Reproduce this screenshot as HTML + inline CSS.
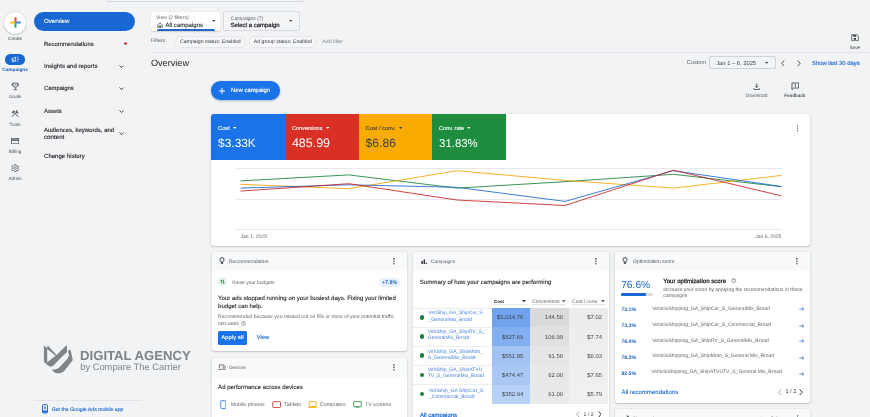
<!DOCTYPE html>
<html lang="en"><head><meta charset="utf-8"><title>Overview - Google Ads</title><style>
html,body{margin:0;padding:0;}
body{width:870px;height:417px;overflow:hidden;background:#f1f3f4;font-family:"Liberation Sans",sans-serif;position:relative;-webkit-font-smoothing:antialiased;}
#root{position:absolute;left:0;top:0;width:870px;height:417px;overflow:hidden;background:#f1f3f4;will-change:transform;}
.t{position:absolute;white-space:nowrap;line-height:1;margin:0;padding:0;text-rendering:geometricPrecision;}
.b{position:absolute;margin:0;padding:0;display:block;}
</style></head>
<body><div id="root">
<div class="b" style="left:105.00px;top:-10.00px;width:200.20px;height:11.70px;background:transparent;border:0.6px solid #d5d8dc;border-radius:3px;box-sizing:border-box;"></div>
<div class="b" style="left:4.30px;top:11.80px;width:22.00px;height:22.00px;background:#fff;border-radius:50%;box-shadow:0 0.5px 1.5px rgba(60,64,67,.3),0 0.5px 2.5px rgba(60,64,67,.15);"></div>
<svg class="b" style="left:9.50px;top:17.30px;" width="11.00" height="11.00" viewBox="0 0 11 11"><rect x="4.500" y="0.300" width="2" height="5.200" fill="#ea4335"/><rect x="4.500" y="5.500" width="2" height="5.200" fill="#34a853"/><rect x="0.300" y="4.500" width="5.200" height="2" fill="#fbbc04"/><rect x="5.500" y="4.500" width="5.200" height="2" fill="#4285f4"/></svg>
<span class="t" style="top:37px;font-size:4.70px;color:#3c4043;left:15.10px;transform:translateX(-50%);">Create</span>
<div class="b" style="left:5.30px;top:54.10px;width:19.30px;height:10.60px;background:#1967d2;border-radius:5.3px;"></div>
<svg class="b" style="left:10.60px;top:56.20px;" width="9.20" height="6.60" viewBox="0 0 18.400 13.200"><path d="M1.800 4.600h3l4.400-2.400v8.600l-4.400-2.400h-3zM3.400 8.600v3.200h2V8.600" fill="none" stroke="#fff" stroke-width="1.500" stroke-linejoin="round"/><path d="M12.400 6.600h4M12 3.600l2.600-2M12 9.600l2.600 2" stroke="#fff" stroke-width="1.500" fill="none"/></svg>
<span class="t" style="top:69px;font-size:4.76px;color:#185abc;font-weight:700;left:15.10px;transform:translateX(-50%);">Campaigns</span>
<svg class="b" style="left:10.80px;top:82.40px;" width="8.60" height="8.60" viewBox="0 0 16 16"><path d="M4 2h8v4a4 4 0 0 1-8 0zM4 3.200H1.600v1.400a2.600 2.600 0 0 0 2.600 2.600M12 3.200h2.400v1.400a2.600 2.600 0 0 1-2.600 2.600M8 10v3.400M4.800 14.200h6.400" stroke="#474b50" stroke-width="1.450" fill="none"/><circle cx="8" cy="5.400" r="1" fill="#474b50"/></svg>
<span class="t" style="top:95px;font-size:4.70px;color:#4d5156;left:15.10px;transform:translateX(-50%);">Goals</span>
<svg class="b" style="left:10.90px;top:109.90px;" width="8.20" height="7.40" viewBox="0 0 16.400 14.800"><path d="M1.600 13.600L10.400 4.800M14.800 13.600L6 4.800" stroke="#474b50" stroke-width="1.900" fill="none"/><path d="M2.600 5.800L7 1.800" stroke="#474b50" stroke-width="3" fill="none"/><path d="M14 1a3.100 3.100 0 1 0 1.600 3.800l-2.300.300-1.100-1.500z" fill="#474b50"/></svg>
<span class="t" style="top:123px;font-size:4.70px;color:#4d5156;left:15.10px;transform:translateX(-50%);">Tools</span>
<svg class="b" style="left:11.00px;top:137.90px;" width="8.20" height="6.20" viewBox="0 0 16.400 12.400"><rect x="0.800" y="0.800" width="14.800" height="10.800" fill="none" stroke="#474b50" stroke-width="1.400"/><rect x="0.800" y="2.800" width="14.800" height="2.800" fill="#474b50"/></svg>
<span class="t" style="top:150px;font-size:4.70px;color:#4d5156;left:15.10px;transform:translateX(-50%);">Billing</span>
<svg class="b" style="left:10.90px;top:164.00px;" width="8.40" height="8.40" viewBox="0 0 16.800 16.800"><path d="M6.77 3.15L7.15 1.11L9.65 1.11L10.03 3.15L12.14 4.37L14.09 3.67L15.34 5.84L13.76 7.18L13.76 9.62L15.34 10.96L14.09 13.13L12.14 12.43L10.03 13.65L9.65 15.69L7.15 15.69L6.77 13.65L4.66 12.43L2.71 13.13L1.46 10.96L3.04 9.62L3.04 7.18L1.46 5.84L2.71 3.67L4.66 4.37Z" fill="none" stroke="#474b50" stroke-width="1.400" stroke-linejoin="round"/><circle cx="8.400" cy="8.400" r="2.300" fill="none" stroke="#474b50" stroke-width="1.300"/></svg>
<span class="t" style="top:177px;font-size:4.70px;color:#4d5156;left:15.10px;transform:translateX(-50%);">Admin</span>
<div class="b" style="left:34.00px;top:11.50px;width:101.10px;height:19.50px;background:#1967d2;border-radius:9.75px;"></div>
<span class="t" style="top:19px;font-size:6.07px;color:#fff;left:44.00px;-webkit-text-stroke:0.11px #fff;letter-spacing:0.004px;">Overview</span>
<span class="t" style="top:43px;font-size:5.96px;color:#202124;left:44.00px;-webkit-text-stroke:0.11px #202124;letter-spacing:0.004px;">Recommendations</span>
<svg class="b" style="left:122.50px;top:41.10px;" width="5.00" height="5.00" viewBox="0 0 5 5"><circle cx="2.5" cy="2.5" r="1.35" fill="#c5221f"/></svg>
<span class="t" style="top:64px;font-size:6.09px;color:#202124;left:44.00px;-webkit-text-stroke:0.11px #202124;letter-spacing:0.005px;">Insights and reports</span>
<span class="t" style="top:87px;font-size:5.87px;color:#202124;left:44.00px;-webkit-text-stroke:0.11px #202124;letter-spacing:0.007px;">Campaigns</span>
<span class="t" style="top:110px;font-size:5.93px;color:#202124;left:44.00px;-webkit-text-stroke:0.11px #202124;letter-spacing:0.003px;">Assets</span>
<span class="t" style="top:128px;font-size:6.01px;color:#202124;left:44.00px;-webkit-text-stroke:0.11px #202124;letter-spacing:0.006px;">Audiences, keywords, and</span>
<span class="t" style="top:135px;font-size:6.19px;color:#202124;left:44.00px;-webkit-text-stroke:0.11px #202124;">content</span>
<span class="t" style="top:154px;font-size:6.07px;color:#202124;left:44.00px;-webkit-text-stroke:0.11px #202124;">Change history</span>
<svg class="b" style="left:118.50px;top:64.90px;" width="5.20" height="3.20" viewBox="0 0 5.2 3.2"><path d="M0.5 0.5L2.6 2.6L4.7 0.5" fill="none" stroke="#3c4043" stroke-width="0.95"/></svg>
<svg class="b" style="left:118.50px;top:87.20px;" width="5.20" height="3.20" viewBox="0 0 5.2 3.2"><path d="M0.5 0.5L2.6 2.6L4.7 0.5" fill="none" stroke="#3c4043" stroke-width="0.95"/></svg>
<svg class="b" style="left:118.50px;top:109.60px;" width="5.20" height="3.20" viewBox="0 0 5.2 3.2"><path d="M0.5 0.5L2.6 2.6L4.7 0.5" fill="none" stroke="#3c4043" stroke-width="0.95"/></svg>
<svg class="b" style="left:118.50px;top:131.90px;" width="5.20" height="3.20" viewBox="0 0 5.2 3.2"><path d="M0.5 0.5L2.6 2.6L4.7 0.5" fill="none" stroke="#3c4043" stroke-width="0.95"/></svg>
<svg class="b" style="left:40.00px;top:342.00px;" width="38.00" height="34.00" viewBox="40 342 38 34"><path fill-rule="evenodd" fill="#7f8489" d="M43.9 345.6L47.2 348.3L47.5 345.2L56.6 354.9L66.5 345.3L67 346V351.9L60.7 358L53.3 365.8Q51.5 367.1 49.3 366.2L48 365.6L43.9 361.7ZM47.2 349.1L55.6 355.7L47.2 362.2Z"/><path fill="#7f8489" d="M69.9 349.2L68 351L69 355.4L67.3 359L64.45 362L61.3 365.3Q60.4 366.6 59.2 367.6Q58 368.6 56.6 369.1L51.8 369.95L54.4 372.2Q55.8 373.2 57.5 373.3Q59.4 373.4 61 372.9Q63 372.2 64.45 370.7L69 365L72.8 360L70.8 351Z"/></svg>
<span class="t" style="top:349px;font-size:13.16px;color:#7f8489;font-weight:700;left:80.00px;letter-spacing:0.003px;">DIGITAL AGENCY</span>
<span class="t" style="top:363px;font-size:9.37px;color:#7f8489;left:80.20px;letter-spacing:-0.007px;">by Compare The Carrier</span>
<div class="b" style="left:34.00px;top:399.50px;width:107.60px;height:0.60px;background:#e1e3e6;"></div>
<svg class="b" style="left:42.30px;top:404.20px;" width="6.00" height="9.60" viewBox="0 0 12 19.2"><rect x="1.2" y="1.2" width="9.6" height="16.8" rx="1.6" fill="none" stroke="#1967d2" stroke-width="2"/><rect x="1.2" y="13" width="9.6" height="4" fill="#1967d2"/><rect x="4.8" y="5" width="2.4" height="5" fill="#1967d2"/></svg>
<span class="t" style="top:408px;font-size:5.17px;color:#1967d2;left:51.70px;-webkit-text-stroke:0.12px #1967d2;letter-spacing:0.004px;">Get the Google Ads mobile app</span>
<div class="b" style="left:151.00px;top:12.00px;width:69.00px;height:19.00px;background:#fff;border-radius:2px;box-shadow:0 0.2px 1.2px rgba(60,64,67,.2);"></div>
<div class="b" style="left:156.80px;top:29.00px;width:57.90px;height:2.00px;background:#2466cc;border-radius:1.5px 1.5px 0 0;"></div>
<span class="t" style="top:16px;font-size:5.12px;color:#5f6368;left:156.00px;letter-spacing:0.026px;">View (2 filters)</span>
<svg class="b" style="left:156.70px;top:21.70px;" width="6.00" height="6.00" viewBox="0 0 12 12"><path d="M1.6 5.4L6 1.6l4.400 3.800v5.200H1.600z" fill="none" stroke="#3c4043" stroke-width="1.500"/><rect x="4.6" y="6.600" width="2.800" height="4" fill="#3c4043"/></svg>
<span class="t" style="top:23px;font-size:6.02px;color:#202124;left:165.50px;-webkit-text-stroke:0.08px #202124;letter-spacing:0.004px;">All campaigns</span>
<svg class="b" style="left:212.10px;top:20.30px;" width="3.40" height="1.80" viewBox="0 0 3.4 1.8"><path d="M0 0H3.4L1.7 1.8Z" fill="#3c4043"/></svg>
<div class="b" style="left:223.40px;top:11.30px;width:76.40px;height:19.90px;background:#f4f5f6;border:0.5px solid #d6d9dd;border-radius:2px;box-sizing:border-box;"></div>
<span class="t" style="top:17px;font-size:5.00px;color:#5f6368;left:230.60px;letter-spacing:-0.007px;">Campaigns (7)</span>
<span class="t" style="top:24px;font-size:5.95px;color:#202124;left:230.60px;-webkit-text-stroke:0.22px #202124;letter-spacing:0.008px;">Select a campaign</span>
<svg class="b" style="left:289.30px;top:20.30px;" width="3.40" height="1.80" viewBox="0 0 3.4 1.8"><path d="M0 0H3.4L1.7 1.8Z" fill="#3c4043"/></svg>
<span class="t" style="top:39px;font-size:5.25px;color:#5f6368;left:150.90px;">Filters</span>
<div class="b" style="left:174.90px;top:35.60px;width:70.80px;height:12.20px;background:#f5f6f7;border:0.5px solid #e5e7ea;border-radius:6.1px;box-sizing:border-box;"></div>
<span class="t" style="top:40px;font-size:5.18px;color:#3c4043;left:180.00px;">Campaign status: Enabled</span>
<div class="b" style="left:248.70px;top:35.60px;width:68.30px;height:12.20px;background:#f5f6f7;border:0.5px solid #e5e7ea;border-radius:6.1px;box-sizing:border-box;"></div>
<span class="t" style="top:40px;font-size:5.19px;color:#3c4043;left:253.80px;letter-spacing:-0.003px;">Ad group status: Enabled</span>
<span class="t" style="top:40px;font-size:5.25px;color:#80868b;left:322.30px;">Add filter</span>
<div class="b" style="left:150.90px;top:52.10px;width:719.10px;height:0.60px;background:#e3e5e8;"></div>
<span class="t" style="top:59px;font-size:9.15px;color:#202124;left:150.90px;letter-spacing:0.009px;">Overview</span>
<svg class="b" style="left:851.00px;top:34.00px;" width="8.00" height="7.40" viewBox="0 0 16 14.8"><path d="M1.4 1.4h10.4l2.8 2.600v9.400H1.400z" fill="none" stroke="#3c4043" stroke-width="1.5"/><rect x="4" y="2" width="6.400" height="3.200" fill="#3c4043"/><rect x="5.600" y="8" width="4.400" height="3.600" fill="#3c4043"/></svg>
<span class="t" style="top:46px;font-size:4.62px;color:#3c4043;left:854.80px;transform:translateX(-50%);letter-spacing:-0.004px;">Save</span>
<span class="t" style="top:61px;font-size:5.61px;color:#5f6368;left:686.80px;letter-spacing:-0.005px;">Custom</span>
<div class="b" style="left:709.20px;top:56.30px;width:66.40px;height:12.70px;background:#f3f4f5;border:0.5px solid #d0d3d7;border-radius:2px;box-sizing:border-box;"></div>
<span class="t" style="top:62px;font-size:5.79px;color:#3c4043;left:716.20px;letter-spacing:0.003px;">Jan 1 – 6, 2025</span>
<svg class="b" style="left:765.30px;top:62.10px;" width="3.40" height="1.80" viewBox="0 0 3.4 1.8"><path d="M0 0H3.4L1.7 1.8Z" fill="#3c4043"/></svg>
<svg class="b" style="left:781.45px;top:59.50px;" width="3.90" height="6.60" viewBox="0 0 3.9 6.6"><path d="M3.2 0.5L0.7 3.3L3.2 6.1" fill="none" stroke="#3c4043" stroke-width="0.9"/></svg>
<svg class="b" style="left:797.35px;top:59.50px;" width="3.90" height="6.60" viewBox="0 0 3.9 6.6"><path d="M0.7 0.5L3.2 3.3L0.7 6.1" fill="none" stroke="#3c4043" stroke-width="0.9"/></svg>
<span class="t" style="top:62px;font-size:5.87px;color:#1967d2;left:812.00px;-webkit-text-stroke:0.12px #1967d2;letter-spacing:0.002px;">Show last 30 days</span>
<svg class="b" style="left:752.80px;top:83.00px;" width="7.40" height="7.40" viewBox="0 0 14 14"><path d="M7 1v7.400M3.800 5.400L7 8.600l3.200-3.200M1.800 9.800v2.600h10.400V9.800" fill="none" stroke="#3c4043" stroke-width="1.5"/></svg>
<span class="t" style="top:95px;font-size:4.91px;color:#5f6368;left:756.50px;transform:translateX(-50%);letter-spacing:-0.004px;">Download</span>
<svg class="b" style="left:790.50px;top:82.10px;" width="8.60" height="8.60" viewBox="0 0 16 16"><path d="M1.800 1.800h12.400v9.400H5l-3.200 3z" fill="none" stroke="#3c4043" stroke-width="1.5"/><rect x="7.200" y="3.600" width="1.600" height="3.600" fill="#3c4043"/><rect x="7.200" y="8" width="1.600" height="1.600" fill="#3c4043"/></svg>
<span class="t" style="top:95px;font-size:4.79px;color:#303438;left:794.70px;transform:translateX(-50%);-webkit-text-stroke:0.06px #303438;">Feedback</span>
<div class="b" style="left:211.40px;top:80.90px;width:68.30px;height:19.00px;background:#1a73e8;border-radius:9.5px;box-shadow:0 0.5px 1.5px rgba(26,95,200,.35),0 1px 2.5px rgba(60,64,67,.16);"></div>
<svg class="b" style="left:218.50px;top:87.50px;" width="6.00" height="6.00" viewBox="0 0 6 6"><path d="M3 0V6M0 3H6" stroke="#fff" stroke-width="1"/></svg>
<span class="t" style="top:89px;font-size:5.92px;color:#fff;left:231.00px;-webkit-text-stroke:0.15px #fff;">New campaign</span>
<div class="b" style="left:211.40px;top:114.20px;width:598.60px;height:131.40px;background:#fff;border-radius:3px;box-shadow:0 0.4px 1px rgba(60,64,67,.17),0 0.6px 2px 0.3px rgba(60,64,67,.09);"></div>
<div class="b" style="left:211.40px;top:114.20px;width:73.80px;height:46.10px;background:#1a73e8;border-radius:3px 0 0 0;"></div>
<span class="t" style="top:127px;font-size:5.69px;color:#fff;left:218.10px;-webkit-text-stroke:0.12px #fff;">Cost</span>
<svg class="b" style="left:233.00px;top:127.25px;" width="3.40" height="1.90" viewBox="0 0 3.4 1.9"><path d="M0 0H3.4L1.7 1.9Z" fill="#fff"/></svg>
<span class="t" style="top:138px;font-size:11.90px;color:#fff;left:218.10px;letter-spacing:0.002px;">$3.33K</span>
<div class="b" style="left:285.20px;top:114.20px;width:73.70px;height:46.10px;background:#d93025;"></div>
<span class="t" style="top:127px;font-size:5.49px;color:#fff;left:291.90px;-webkit-text-stroke:0.12px #fff;">Conversions</span>
<svg class="b" style="left:325.60px;top:127.25px;" width="3.40" height="1.90" viewBox="0 0 3.4 1.9"><path d="M0 0H3.4L1.7 1.9Z" fill="#fff"/></svg>
<span class="t" style="top:137px;font-size:12.46px;color:#fff;left:291.90px;">485.99</span>
<div class="b" style="left:358.90px;top:114.20px;width:73.50px;height:46.10px;background:#f9ab00;"></div>
<span class="t" style="top:127px;font-size:5.70px;color:#3c4043;left:365.60px;-webkit-text-stroke:0.12px #3c4043;letter-spacing:0.008px;">Cost / conv.</span>
<svg class="b" style="left:398.50px;top:127.25px;" width="3.40" height="1.90" viewBox="0 0 3.4 1.9"><path d="M0 0H3.4L1.7 1.9Z" fill="#3c4043"/></svg>
<span class="t" style="top:137px;font-size:12.11px;color:#3c4043;left:365.60px;letter-spacing:-0.002px;">$6.86</span>
<div class="b" style="left:432.40px;top:114.20px;width:73.60px;height:46.10px;background:#1e8e3e;"></div>
<span class="t" style="top:127px;font-size:5.51px;color:#fff;left:439.10px;-webkit-text-stroke:0.12px #fff;letter-spacing:0.003px;">Conv. rate</span>
<svg class="b" style="left:467.30px;top:127.25px;" width="3.40" height="1.90" viewBox="0 0 3.4 1.9"><path d="M0 0H3.4L1.7 1.9Z" fill="#fff"/></svg>
<span class="t" style="top:139px;font-size:11.38px;color:#fff;left:439.10px;">31.83%</span>
<svg class="b" style="left:796.60px;top:125.40px;" width="1.80" height="6.60" viewBox="0 0 1.8 6.6"><circle cx="0.9" cy="0.9" r="0.8" fill="#3c4043"/><circle cx="0.9" cy="3.3" r="0.8" fill="#3c4043"/><circle cx="0.9" cy="5.7" r="0.8" fill="#3c4043"/></svg>
<div class="b" style="left:235.50px;top:168.05px;width:546.50px;height:0.50px;background:#e6e8eb;"></div>
<div class="b" style="left:235.50px;top:199.15px;width:546.50px;height:0.50px;background:#e6e8eb;"></div>
<div class="b" style="left:235.50px;top:229.25px;width:546.50px;height:0.50px;background:#e6e8eb;"></div>
<svg class="b" style="left:230.00px;top:160.30px;" width="560.00" height="60.00" viewBox="230 160.3 560 60"><polyline points="240.5,181.2 348.7,175.2 456.9,188.4 565.0,182.0 673.4,174.6 781.4,187.0" fill="none" stroke="#188038" stroke-width="0.85" stroke-linejoin="round"/><polyline points="240.5,184.6 348.7,189.0 456.9,171.0 565.0,180.7 673.4,188.4 781.4,175.7" fill="none" stroke="#f5a400" stroke-width="0.85" stroke-linejoin="round"/><polyline points="240.5,188.4 348.7,185.1 456.9,187.6 565.0,201.7 673.4,171.0 781.4,186.8" fill="none" stroke="#1b66d2" stroke-width="0.85" stroke-linejoin="round"/><polyline points="240.5,191.4 348.7,184.0 456.9,200.3 565.0,205.8 673.4,170.5 781.4,196.1" fill="none" stroke="#c5221f" stroke-width="0.85" stroke-linejoin="round"/></svg>
<span class="t" style="top:235px;font-size:5.07px;color:#5f6368;left:240.50px;letter-spacing:0.003px;">Jan 1, 2025</span>
<span class="t" style="top:235px;font-size:5.01px;color:#5f6368;right:88.60px;letter-spacing:0.005px;">Jan 6, 2025</span>
<div class="b" style="left:211.70px;top:252.00px;width:195.00px;height:99.30px;background:#fff;border-radius:3px;box-shadow:0 0.4px 1px rgba(60,64,67,.17),0 0.6px 2px 0.3px rgba(60,64,67,.09);"></div>
<div class="b" style="left:211.70px;top:252.00px;width:195.00px;height:19.10px;background:#f8f9fa;border-radius:3px 3px 0 0;"></div>
<svg class="b" style="left:219.00px;top:257.40px;" width="6.00" height="7.60" viewBox="0 0 12 15.2"><path d="M6 1.200a4 4 0 0 1 2.200 7.400v1.800H3.800V8.600A4 4 0 0 1 6 1.200z" fill="none" stroke="#26292d" stroke-width="1.700"/><rect x="3.800" y="11.600" width="4.400" height="1.900" fill="#26292d"/></svg>
<span class="t" style="top:260px;font-size:5.06px;color:#53575c;left:228.90px;letter-spacing:0.003px;">Recommendation</span>
<svg class="b" style="left:393.40px;top:258.30px;" width="1.80" height="6.60" viewBox="0 0 1.8 6.6"><circle cx="0.9" cy="0.9" r="0.8" fill="#3c4043"/><circle cx="0.9" cy="3.3" r="0.8" fill="#3c4043"/><circle cx="0.9" cy="5.7" r="0.8" fill="#3c4043"/></svg>
<div class="b" style="left:218.10px;top:277.40px;width:9.00px;height:9.00px;background:#e6f4ea;border-radius:50%;"></div>
<svg class="b" style="left:220.10px;top:279.30px;" width="5.00" height="5.20" viewBox="0 0 10 10.400"><path d="M3 9V2M1 4l2-2.200L5 4M7 1.400v7M5 6.400l2 2.200 2-2.200" fill="none" stroke="#188038" stroke-width="1.300"/></svg>
<span class="t" style="top:282px;font-size:4.91px;color:#5f6368;left:232.30px;">Raise your budgets</span>
<div class="b" style="left:379.00px;top:277.60px;width:21.10px;height:9.40px;background:#e8f0fe;border-radius:4.7px;"></div>
<span class="t" style="top:281px;font-size:5.30px;color:#1967d2;font-weight:700;left:389.60px;transform:translateX(-50%);letter-spacing:0.006px;">+7.8%</span>
<span class="t" style="top:296px;font-size:6.04px;color:#202124;left:218.10px;-webkit-text-stroke:0.09px #202124;letter-spacing:0.004px;">Your ads stopped running on your busiest days. Fixing your limited</span>
<span class="t" style="top:304px;font-size:6.02px;color:#202124;left:218.10px;-webkit-text-stroke:0.09px #202124;">budget can help.</span>
<span class="t" style="top:315px;font-size:5.06px;color:#5f6368;left:218.10px;letter-spacing:0.006px;">Recommended because you missed out on 5% or more of your potential traffic</span>
<span class="t" style="top:322px;font-size:4.99px;color:#5f6368;left:218.10px;letter-spacing:0.009px;">last week</span>
<svg class="b" style="left:241.30px;top:320.60px;" width="5.00" height="5.00" viewBox="0 0 10 10"><circle cx="5" cy="5" r="4" fill="none" stroke="#5f6368" stroke-width="1"/><path d="M3.800 4a1.300 1.300 0 1 1 1.800 1.200v.8" fill="none" stroke="#5f6368" stroke-width="1"/><rect x="5" y="7" width="1" height="1" fill="#5f6368"/></svg>
<div class="b" style="left:218.10px;top:330.60px;width:28.90px;height:14.00px;background:#1a73e8;border-radius:1.6px;"></div>
<span class="t" style="top:336px;font-size:5.43px;color:#fff;font-weight:700;left:232.50px;transform:translateX(-50%);">Apply all</span>
<span class="t" style="top:336px;font-size:5.78px;color:#1967d2;left:256.70px;-webkit-text-stroke:0.12px #1967d2;">View</span>
<div class="b" style="left:211.70px;top:357.90px;width:195.00px;height:82.10px;background:#fff;border-radius:3px;box-shadow:0 0.4px 1px rgba(60,64,67,.17),0 0.6px 2px 0.3px rgba(60,64,67,.09);"></div>
<div class="b" style="left:211.70px;top:357.90px;width:195.00px;height:19.10px;background:#f8f9fa;border-radius:3px 3px 0 0;"></div>
<svg class="b" style="left:218.20px;top:363.80px;" width="7.60" height="6.40" viewBox="0 0 15.2 12.800"><path d="M2.600 9V1.800h9.800M0.600 11.400h8" fill="none" stroke="#3c4043" stroke-width="1.400"/><rect x="10" y="4.400" width="4.400" height="7" rx="0.600" fill="none" stroke="#3c4043" stroke-width="1.300"/></svg>
<span class="t" style="top:367px;font-size:4.81px;color:#53575c;left:228.90px;letter-spacing:0.005px;">Devices</span>
<svg class="b" style="left:393.40px;top:364.20px;" width="1.80" height="6.60" viewBox="0 0 1.8 6.6"><circle cx="0.9" cy="0.9" r="0.8" fill="#3c4043"/><circle cx="0.9" cy="3.3" r="0.8" fill="#3c4043"/><circle cx="0.9" cy="5.7" r="0.8" fill="#3c4043"/></svg>
<span class="t" style="top:385px;font-size:6.05px;color:#202124;left:218.10px;-webkit-text-stroke:0.09px #202124;">Ad performance across devices</span>
<svg class="b" style="left:219.60px;top:399.70px;" width="6.60" height="9.20" viewBox="0 0 13.200 18.400"><rect x="1.400" y="1.400" width="10.400" height="15.600" rx="1.600" fill="#fff" stroke="#2f74d8" stroke-width="1.700"/></svg>
<span class="t" style="top:403px;font-size:5.18px;color:#5f6368;left:231.00px;letter-spacing:-0.003px;">Mobile phones</span>
<svg class="b" style="left:271.60px;top:400.50px;" width="9.20" height="7.20" viewBox="0 0 18.400 14.400"><rect x="1.400" y="1.400" width="15.600" height="11.600" rx="1.600" fill="#fff" stroke="#c9352b" stroke-width="1.700"/></svg>
<span class="t" style="top:403px;font-size:5.31px;color:#5f6368;left:284.20px;">Tablets</span>
<svg class="b" style="left:307.50px;top:400.50px;" width="9.40" height="7.40" viewBox="0 0 18.800 14.800"><rect x="2.400" y="1.400" width="14" height="9.600" rx="1" fill="#fff" stroke="#f2a600" stroke-width="1.700"/><path d="M0.600 13.400h17.600" stroke="#f9ab00" stroke-width="2"/></svg>
<span class="t" style="top:403px;font-size:5.22px;color:#5f6368;left:320.10px;letter-spacing:-0.003px;">Computers</span>
<svg class="b" style="left:352.50px;top:400.50px;" width="9.00" height="7.60" viewBox="0 0 18 15.200"><rect x="1.400" y="1.400" width="15.200" height="10" rx="1" fill="#fff" stroke="#1e8e3e" stroke-width="1.700"/><path d="M5.400 14h7.200" stroke="#1e8e3e" stroke-width="2"/></svg>
<span class="t" style="top:403px;font-size:5.15px;color:#5f6368;left:365.00px;">TV screens</span>
<div class="b" style="left:413.00px;top:252.00px;width:195.50px;height:188.00px;background:#fff;border-radius:3px;box-shadow:0 0.4px 1px rgba(60,64,67,.17),0 0.6px 2px 0.3px rgba(60,64,67,.09);"></div>
<div class="b" style="left:413.00px;top:252.00px;width:195.50px;height:19.10px;background:#f8f9fa;border-radius:3px 3px 0 0;"></div>
<svg class="b" style="left:420.50px;top:258.50px;" width="6.50" height="5.50" viewBox="0 0 6.500 5.500"><rect x="0.400" y="2" width="1.500" height="3.300" fill="#303438"/><rect x="2.600" y="0.500" width="1.500" height="4.800" fill="#303438"/><rect x="4.800" y="3.900" width="1.400" height="1.400" fill="#303438"/></svg>
<span class="t" style="top:261px;font-size:4.81px;color:#53575c;left:431.00px;letter-spacing:0.004px;">Campaigns</span>
<svg class="b" style="left:595.20px;top:258.30px;" width="1.80" height="6.60" viewBox="0 0 1.8 6.6"><circle cx="0.9" cy="0.9" r="0.8" fill="#3c4043"/><circle cx="0.9" cy="3.3" r="0.8" fill="#3c4043"/><circle cx="0.9" cy="5.7" r="0.8" fill="#3c4043"/></svg>
<span class="t" style="top:280px;font-size:6.09px;color:#202124;left:419.80px;-webkit-text-stroke:0.09px #202124;letter-spacing:0.006px;">Summary of how your campaigns are performing</span>
<span class="t" style="top:300px;font-size:4.50px;color:#202124;font-weight:700;left:494.00px;">Cost</span>
<svg class="b" style="left:522.20px;top:300.40px;" width="3.80" height="2.40" viewBox="0 0 3.8 2.4"><path d="M0 0H3.8L1.9 2.4Z" fill="#3c4043"/></svg>
<span class="t" style="top:301px;font-size:4.95px;color:#5f6368;left:532.20px;letter-spacing:0.004px;">Conversions</span>
<svg class="b" style="left:561.70px;top:300.40px;" width="3.80" height="2.40" viewBox="0 0 3.8 2.4"><path d="M0 0H3.8L1.9 2.4Z" fill="#5f6368"/></svg>
<span class="t" style="top:300px;font-size:5.05px;color:#5f6368;left:572.00px;">Cost / conv.</span>
<svg class="b" style="left:600.80px;top:300.40px;" width="3.80" height="2.40" viewBox="0 0 3.8 2.4"><path d="M0 0H3.8L1.9 2.4Z" fill="#5f6368"/></svg>
<div class="b" style="left:494.30px;top:304.00px;width:32.30px;height:0.50px;background:#e2e4e7;"></div>
<div class="b" style="left:532.00px;top:304.00px;width:34.40px;height:0.50px;background:#e2e4e7;"></div>
<div class="b" style="left:572.00px;top:304.00px;width:33.80px;height:0.50px;background:#e2e4e7;"></div>
<div class="b" style="left:413.00px;top:307.85px;width:78.70px;height:0.50px;background:#ebedef;"></div>
<div class="b" style="left:491.70px;top:308.10px;width:38.10px;height:19.10px;background:#6fa1ec;"></div>
<div class="b" style="left:529.80px;top:308.10px;width:39.60px;height:19.10px;background:#dadada;"></div>
<div class="b" style="left:569.40px;top:308.10px;width:39.10px;height:19.10px;background:#ececec;"></div>
<div class="b" style="left:419.90px;top:315.25px;width:4.40px;height:4.40px;background:#188038;border-radius:50%;"></div>
<span class="t" style="top:312px;font-size:4.86px;color:#4a86e0;left:428.50px;">VehShip_GA_ShipCar_S</span>
<span class="t" style="top:319px;font-size:4.91px;color:#4a86e0;left:428.50px;letter-spacing:-0.002px;">_GeneralMix_Broad</span>
<span class="t" style="top:316px;font-size:5.90px;color:#3c4043;right:346.70px;">$1,014.76</span>
<span class="t" style="top:316px;font-size:5.90px;color:#3c4043;right:307.00px;">144.50</span>
<span class="t" style="top:316px;font-size:5.90px;color:#3c4043;right:268.00px;">$7.02</span>
<div class="b" style="left:413.00px;top:326.95px;width:78.70px;height:0.50px;background:#ebedef;"></div>
<div class="b" style="left:491.70px;top:327.20px;width:38.10px;height:19.00px;background:#83aeef;"></div>
<div class="b" style="left:529.80px;top:327.20px;width:39.60px;height:19.00px;background:#e0e0e0;"></div>
<div class="b" style="left:569.40px;top:327.20px;width:39.10px;height:19.00px;background:#ededed;"></div>
<div class="b" style="left:419.90px;top:334.30px;width:4.40px;height:4.40px;background:#188038;border-radius:50%;"></div>
<span class="t" style="top:330px;font-size:4.99px;color:#4a86e0;left:427.80px;letter-spacing:0.009px;">VehShip_GA_ShipRV_S_</span>
<span class="t" style="top:337px;font-size:4.97px;color:#4a86e0;left:427.80px;letter-spacing:0.006px;">GeneralMix_Broad</span>
<span class="t" style="top:336px;font-size:5.90px;color:#3c4043;right:346.70px;">$827.69</span>
<span class="t" style="top:336px;font-size:5.90px;color:#3c4043;right:307.00px;">106.99</span>
<span class="t" style="top:336px;font-size:5.90px;color:#3c4043;right:268.00px;">$7.74</span>
<div class="b" style="left:413.00px;top:345.95px;width:78.70px;height:0.50px;background:#ebedef;"></div>
<div class="b" style="left:491.70px;top:346.20px;width:38.10px;height:19.20px;background:#a1c2f3;"></div>
<div class="b" style="left:529.80px;top:346.20px;width:39.60px;height:19.20px;background:#e6e6e6;"></div>
<div class="b" style="left:569.40px;top:346.20px;width:39.10px;height:19.20px;background:#efefef;"></div>
<div class="b" style="left:419.90px;top:353.40px;width:4.40px;height:4.40px;background:#188038;border-radius:50%;"></div>
<span class="t" style="top:350px;font-size:5.02px;color:#4a86e0;left:427.80px;letter-spacing:-0.005px;">VehShip_GA_ShipMoto_</span>
<span class="t" style="top:356px;font-size:5.01px;color:#4a86e0;left:427.80px;">S_GeneralMix_Broad</span>
<span class="t" style="top:355px;font-size:5.90px;color:#3c4043;right:346.70px;">$551.85</span>
<span class="t" style="top:355px;font-size:5.90px;color:#3c4043;right:307.00px;">91.50</span>
<span class="t" style="top:355px;font-size:5.90px;color:#3c4043;right:268.00px;">$6.03</span>
<div class="b" style="left:413.00px;top:365.15px;width:78.70px;height:0.50px;background:#ebedef;"></div>
<div class="b" style="left:491.70px;top:365.40px;width:38.10px;height:19.30px;background:#a9c7f4;"></div>
<div class="b" style="left:529.80px;top:365.40px;width:39.60px;height:19.30px;background:#e8e8e8;"></div>
<div class="b" style="left:569.40px;top:365.40px;width:39.10px;height:19.30px;background:#efefef;"></div>
<div class="b" style="left:419.90px;top:372.65px;width:4.40px;height:4.40px;background:#188038;border-radius:50%;"></div>
<span class="t" style="top:368px;font-size:5.02px;color:#4a86e0;left:427.80px;letter-spacing:-0.003px;">VehShip_GA_ShipATVU</span>
<span class="t" style="top:375px;font-size:4.94px;color:#4a86e0;left:427.80px;letter-spacing:-0.003px;">TV_S_GeneralMix_Broad</span>
<span class="t" style="top:374px;font-size:5.90px;color:#3c4043;right:346.70px;">$474.47</span>
<span class="t" style="top:374px;font-size:5.90px;color:#3c4043;right:307.00px;">62.00</span>
<span class="t" style="top:374px;font-size:5.90px;color:#3c4043;right:268.00px;">$7.65</span>
<div class="b" style="left:413.00px;top:384.45px;width:78.70px;height:0.50px;background:#ebedef;"></div>
<div class="b" style="left:491.70px;top:384.70px;width:38.10px;height:19.00px;background:#b7d0f6;"></div>
<div class="b" style="left:529.80px;top:384.70px;width:39.60px;height:19.00px;background:#e9e9e9;"></div>
<div class="b" style="left:569.40px;top:384.70px;width:39.10px;height:19.00px;background:#f0f0f0;"></div>
<div class="b" style="left:419.90px;top:391.80px;width:4.40px;height:4.40px;background:#188038;border-radius:50%;"></div>
<span class="t" style="top:389px;font-size:5.06px;color:#4a86e0;left:429.00px;letter-spacing:0.003px;">VehShip_GA ShipCar_S</span>
<span class="t" style="top:395px;font-size:5.01px;color:#4a86e0;left:429.00px;">_Commercial_Broad</span>
<span class="t" style="top:393px;font-size:5.90px;color:#3c4043;right:346.70px;">$352.94</span>
<span class="t" style="top:393px;font-size:5.90px;color:#3c4043;right:307.00px;">61.00</span>
<span class="t" style="top:393px;font-size:5.90px;color:#3c4043;right:268.00px;">$5.79</span>
<span class="t" style="top:414px;font-size:5.93px;color:#1967d2;left:420.10px;-webkit-text-stroke:0.20px #1967d2;">All campaigns</span>
<svg class="b" style="left:576.05px;top:411.30px;" width="3.90" height="6.60" viewBox="0 0 3.9 6.6"><path d="M3.2 0.5L0.7 3.3L3.2 6.1" fill="none" stroke="#9aa0a6" stroke-width="0.9"/></svg>
<span class="t" style="top:413px;font-size:5.20px;color:#3c4043;left:588.50px;transform:translateX(-50%);">1 / 2</span>
<svg class="b" style="left:597.55px;top:411.30px;" width="3.90" height="6.60" viewBox="0 0 3.9 6.6"><path d="M0.7 0.5L3.2 3.3L0.7 6.1" fill="none" stroke="#202124" stroke-width="0.9"/></svg>
<div class="b" style="left:614.70px;top:252.00px;width:195.00px;height:150.50px;background:#fff;border-radius:3px;box-shadow:0 0.4px 1px rgba(60,64,67,.17),0 0.6px 2px 0.3px rgba(60,64,67,.09);"></div>
<div class="b" style="left:614.70px;top:252.00px;width:195.00px;height:19.10px;background:#f8f9fa;border-radius:3px 3px 0 0;"></div>
<svg class="b" style="left:622.30px;top:257.40px;" width="6.00" height="7.60" viewBox="0 0 12 15.2"><path d="M6 1.200a4 4 0 0 1 2.200 7.400v1.800H3.800V8.600A4 4 0 0 1 6 1.200z" fill="none" stroke="#26292d" stroke-width="1.700"/><rect x="3.800" y="11.600" width="4.400" height="1.900" fill="#26292d"/></svg>
<span class="t" style="top:260px;font-size:5.03px;color:#53575c;left:633.00px;letter-spacing:0.003px;">Optimization score</span>
<svg class="b" style="left:796.40px;top:258.30px;" width="1.80" height="6.60" viewBox="0 0 1.8 6.6"><circle cx="0.9" cy="0.9" r="0.8" fill="#3c4043"/><circle cx="0.9" cy="3.3" r="0.8" fill="#3c4043"/><circle cx="0.9" cy="5.7" r="0.8" fill="#3c4043"/></svg>
<span class="t" style="top:281px;font-size:10.23px;color:#1967d2;left:621.20px;letter-spacing:0.003px;">76.6%</span>
<div class="b" style="left:621.40px;top:293.20px;width:31.40px;height:2.50px;background:#dadce0;border-radius:1.25px;"></div>
<div class="b" style="left:621.40px;top:293.20px;width:24.40px;height:2.50px;background:#1967d2;border-radius:1.25px;"></div>
<span class="t" style="top:279px;font-size:6.07px;color:#202124;left:663.20px;-webkit-text-stroke:0.25px #202124;letter-spacing:0.004px;">Your optimization score</span>
<svg class="b" style="left:730.70px;top:278.40px;" width="5.20" height="5.20" viewBox="0 0 10 10"><circle cx="5" cy="5" r="4" fill="none" stroke="#5f6368" stroke-width="1"/><path d="M3.800 4a1.300 1.300 0 1 1 1.800 1.200v.8" fill="none" stroke="#5f6368" stroke-width="1"/><rect x="5" y="7" width="1" height="1" fill="#5f6368"/></svg>
<span class="t" style="top:288px;font-size:5.02px;color:#5f6368;left:663.20px;">Increase your score by applying the recommendations in these</span>
<span class="t" style="top:295px;font-size:4.96px;color:#5f6368;left:663.20px;letter-spacing:0.005px;">campaigns</span>
<span class="t" style="top:308px;font-size:5.16px;color:#185abc;font-weight:700;left:621.40px;letter-spacing:-0.005px;">73.1%</span>
<span class="t" style="top:307px;font-size:5.02px;color:#63676c;left:652.30px;letter-spacing:0.002px;">VehicleShipping_GA_ShipCar_S_GeneralMix_Broad</span>
<svg class="b" style="left:798.60px;top:307.20px;" width="5.40" height="4.00" viewBox="0 0 5.400 4"><path d="M0.300 2H4.700M3 0.400L4.700 2L3 3.600" fill="none" stroke="#1967d2" stroke-width="0.700"/></svg>
<span class="t" style="top:324px;font-size:5.16px;color:#185abc;font-weight:700;left:621.40px;letter-spacing:-0.005px;">73.3%</span>
<span class="t" style="top:323px;font-size:5.02px;color:#63676c;left:652.30px;letter-spacing:0.002px;">VehicleShipping_GA_ShipCar_S_Commercial_Broad</span>
<svg class="b" style="left:798.60px;top:323.80px;" width="5.40" height="4.00" viewBox="0 0 5.400 4"><path d="M0.300 2H4.700M3 0.400L4.700 2L3 3.600" fill="none" stroke="#1967d2" stroke-width="0.700"/></svg>
<span class="t" style="top:340px;font-size:5.16px;color:#185abc;font-weight:700;left:621.40px;letter-spacing:-0.005px;">76.4%</span>
<span class="t" style="top:339px;font-size:5.03px;color:#63676c;left:652.30px;letter-spacing:0.007px;">VehicleShipping_GA_ShipRV_S_GeneralMix_Broad</span>
<svg class="b" style="left:798.60px;top:339.00px;" width="5.40" height="4.00" viewBox="0 0 5.400 4"><path d="M0.300 2H4.700M3 0.400L4.700 2L3 3.600" fill="none" stroke="#1967d2" stroke-width="0.700"/></svg>
<span class="t" style="top:356px;font-size:5.16px;color:#185abc;font-weight:700;left:621.40px;letter-spacing:-0.005px;">78.3%</span>
<span class="t" style="top:354px;font-size:5.01px;color:#63676c;left:652.30px;letter-spacing:0.005px;">VehicleShipping_GA_ShipMoto_S_General Mix_Broad</span>
<svg class="b" style="left:798.60px;top:355.90px;" width="5.40" height="4.00" viewBox="0 0 5.400 4"><path d="M0.300 2H4.700M3 0.400L4.700 2L3 3.600" fill="none" stroke="#1967d2" stroke-width="0.700"/></svg>
<span class="t" style="top:372px;font-size:5.16px;color:#185abc;font-weight:700;left:621.40px;letter-spacing:-0.005px;">82.5%</span>
<span class="t" style="top:370px;font-size:5.03px;color:#63676c;left:651.20px;letter-spacing:0.010px;">VehicleShipping_GA_ShipATVUTV_S_General Mix_Broad</span>
<svg class="b" style="left:798.60px;top:371.90px;" width="5.40" height="4.00" viewBox="0 0 5.400 4"><path d="M0.300 2H4.700M3 0.400L4.700 2L3 3.600" fill="none" stroke="#1967d2" stroke-width="0.700"/></svg>
<span class="t" style="top:390px;font-size:6.06px;color:#1967d2;left:621.60px;-webkit-text-stroke:0.08px #1967d2;letter-spacing:0.007px;">All recommendations</span>
<svg class="b" style="left:778.45px;top:388.70px;" width="3.90" height="6.60" viewBox="0 0 3.9 6.6"><path d="M3.2 0.5L0.7 3.3L3.2 6.1" fill="none" stroke="#9aa0a6" stroke-width="0.9"/></svg>
<span class="t" style="top:390px;font-size:5.66px;color:#3c4043;left:790.90px;transform:translateX(-50%);letter-spacing:-0.003px;">1 / 2</span>
<svg class="b" style="left:798.85px;top:388.70px;" width="3.90" height="6.60" viewBox="0 0 3.9 6.6"><path d="M0.7 0.5L3.2 3.3L0.7 6.1" fill="none" stroke="#202124" stroke-width="0.9"/></svg>
<div class="b" style="left:614.70px;top:409.40px;width:195.00px;height:60.60px;background:#fff;border-radius:3px;box-shadow:0 0.4px 1px rgba(60,64,67,.17),0 0.6px 2px 0.3px rgba(60,64,67,.09);"></div>
<div class="b" style="left:614.70px;top:409.40px;width:195.00px;height:19.10px;background:#f8f9fa;border-radius:3px 3px 0 0;"></div>
<svg class="b" style="left:622.20px;top:414.60px;" width="7.00" height="7.00" viewBox="0 0 14 14"><path d="M2 12L6 6.400l2.800 2.800L12.400 2M9.200 2h3.200v3.200" fill="none" stroke="#3c4043" stroke-width="1.600"/></svg>
<span class="t" style="top:418px;font-size:4.80px;color:#5f6368;left:633.00px;">Biggest changes</span>
<span class="t" style="top:418px;font-size:4.80px;color:#3c4043;right:85.00px;">Last 7 days</span>
<svg class="b" style="left:796.60px;top:415.30px;" width="1.80" height="6.60" viewBox="0 0 1.8 6.6"><circle cx="0.9" cy="0.9" r="0.8" fill="#3c4043"/><circle cx="0.9" cy="3.3" r="0.8" fill="#3c4043"/><circle cx="0.9" cy="5.7" r="0.8" fill="#3c4043"/></svg>
</div></body></html>
